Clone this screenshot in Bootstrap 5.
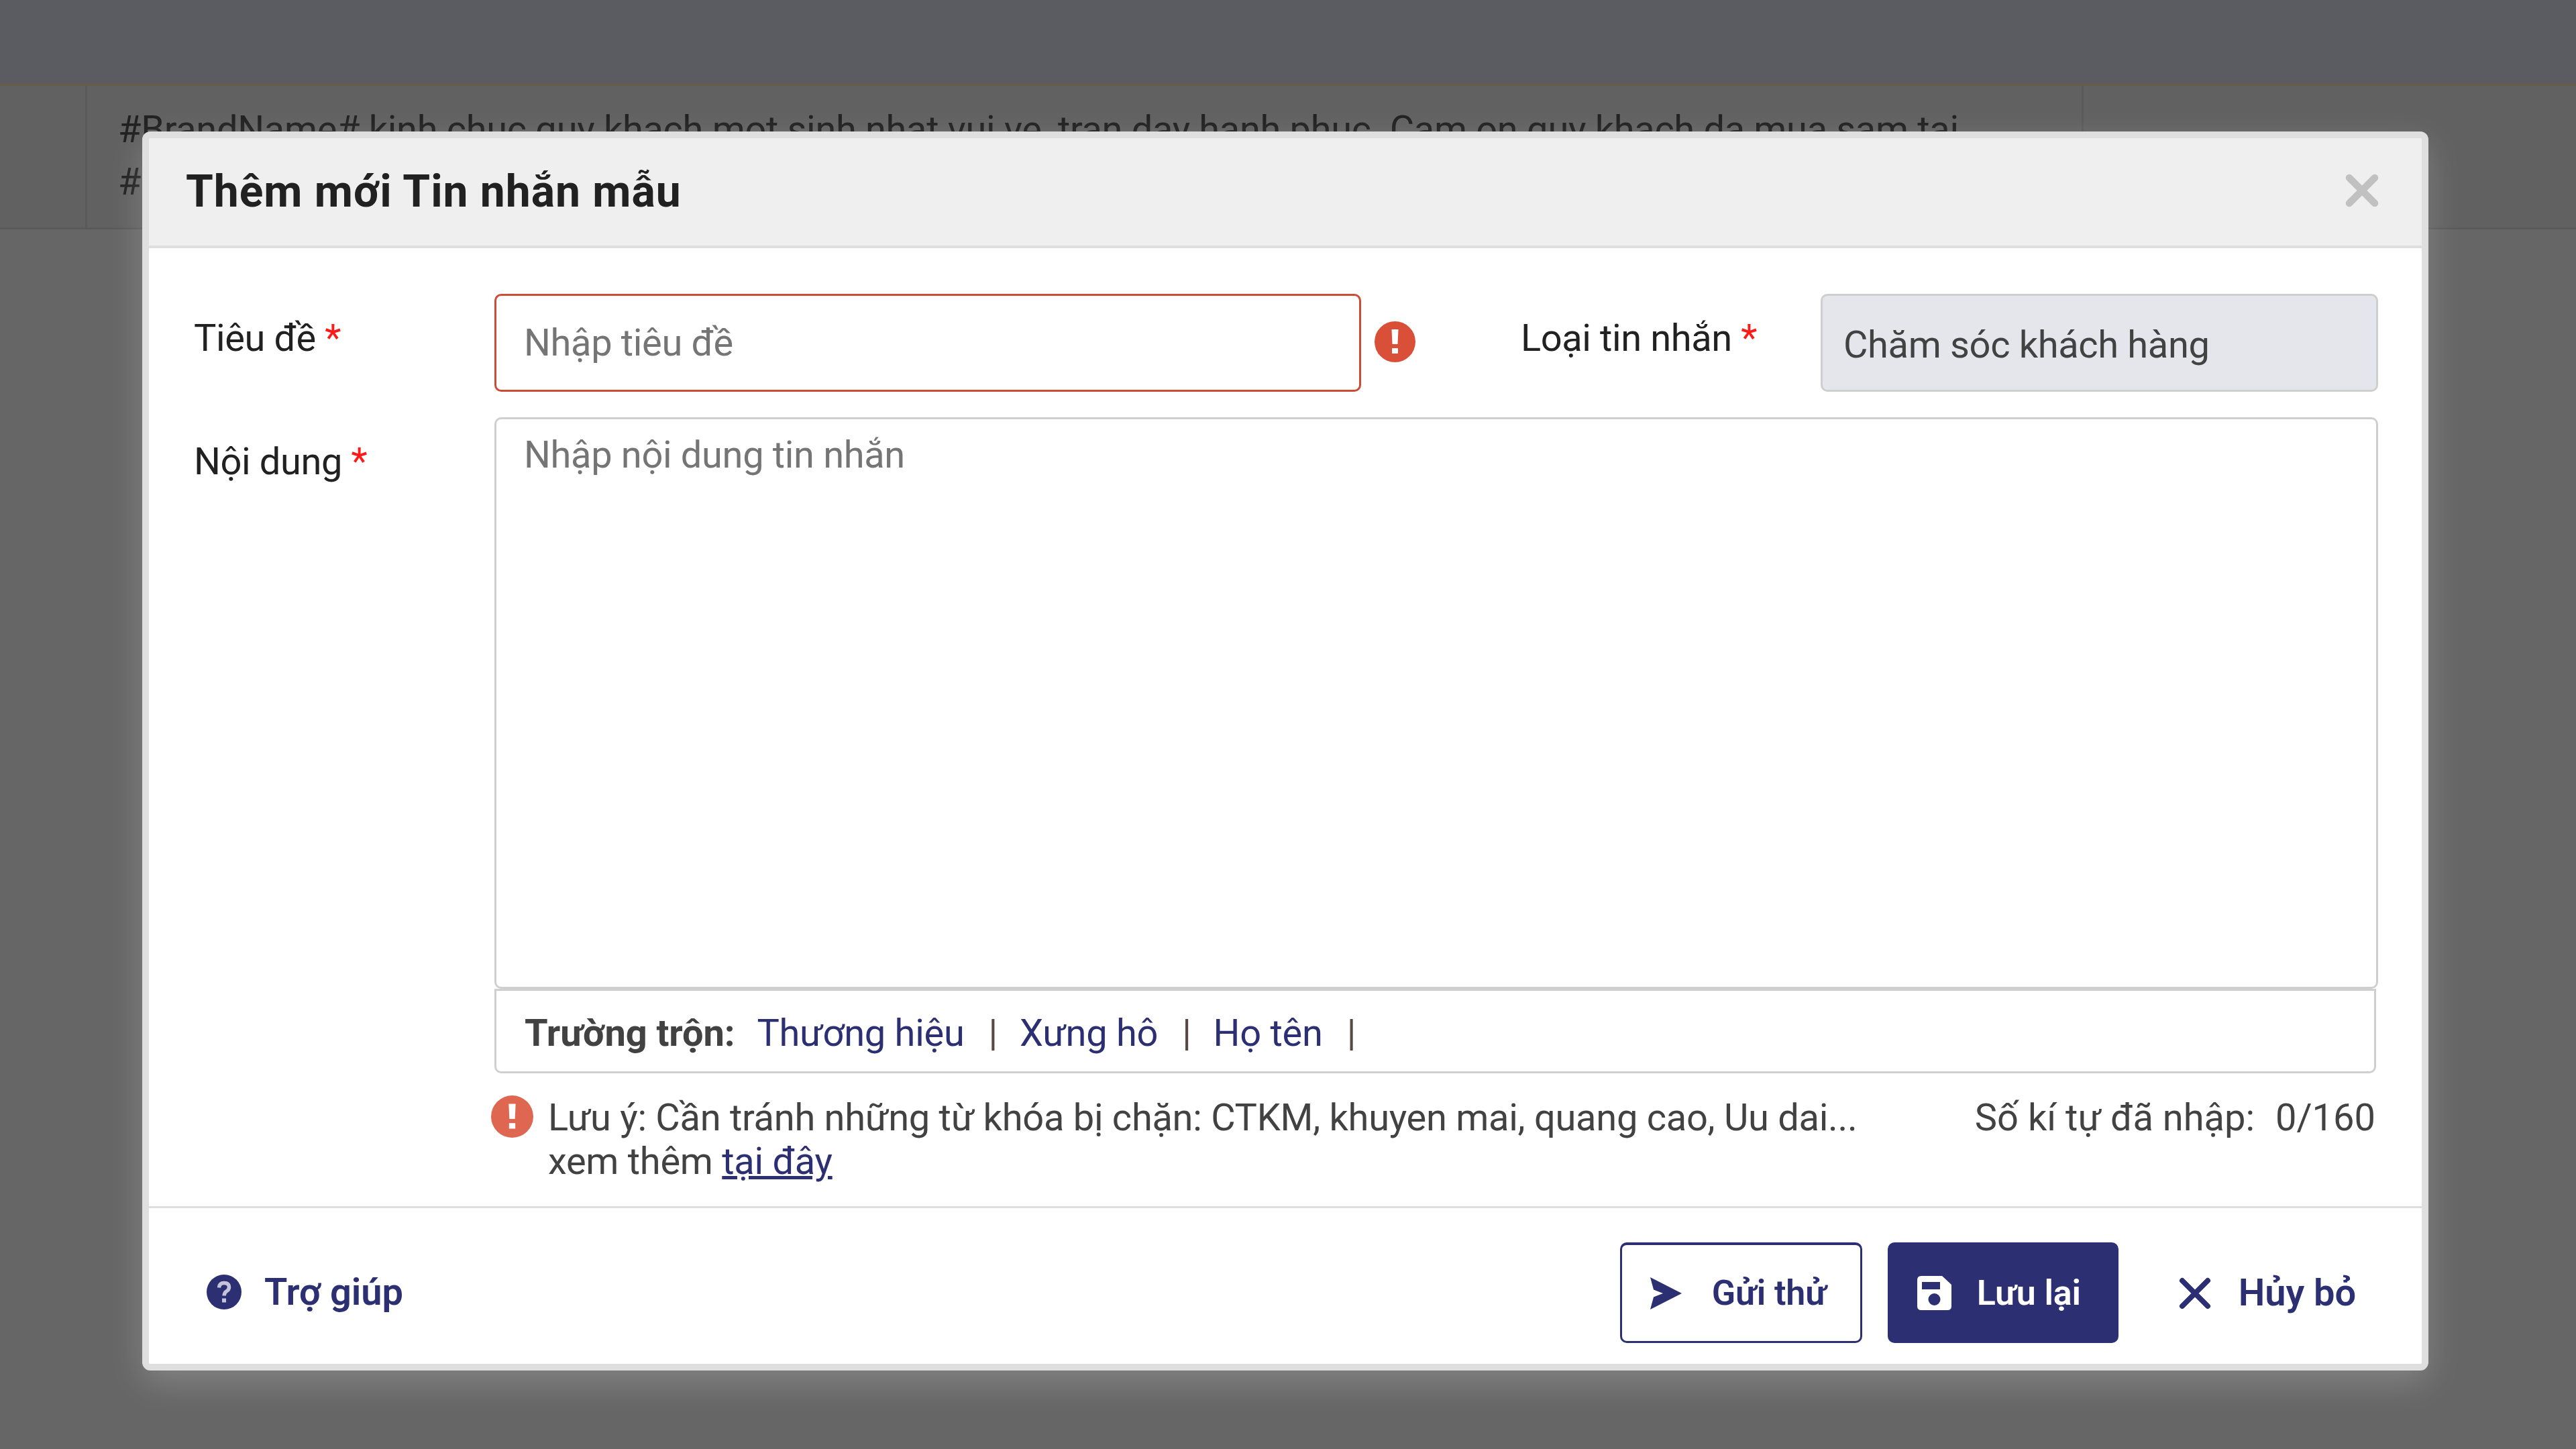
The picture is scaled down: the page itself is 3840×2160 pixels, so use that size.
<!DOCTYPE html>
<html lang="vi">
<head>
<meta charset="utf-8">
<title>Thêm mới Tin nhắn mẫu</title>
<link href="https://cdn.jsdelivr.net/npm/bootstrap@5.3.0/dist/css/bootstrap.min.css" rel="stylesheet">
<style>
body{width:3840px;height:2160px;overflow:hidden;background:#666;font-family:Roboto,"Liberation Sans",sans-serif;font-size:56px;line-height:65px;letter-spacing:-.28px;color:#424242}
.t-head{height:124px;background:#5b5c61}
.t-row{height:218px;background:#616161;border-top:4px solid #655c49;border-bottom:3px solid #5a5a5a;color:#212121;line-height:78px;letter-spacing:-.34px}
.c-a{width:130px}.c-b{width:2976px}
.t-row .c-a,.t-row .c-b{border-right:3px solid #5a5a5a}
.t-row .c-b{padding:26px 0 0 46px}
.dlg{position:absolute;left:212px;top:196px;width:3408px;height:1847px;border:10px solid #dfdfdf;border-radius:12px;background:#fff;box-shadow:0 17px 52px rgba(255,255,255,.2)}
.dlg-head{height:164px;background:#efefef;border-bottom:4px solid #dfdfdf;padding:0 64px 4px 55px}
.dlg-title{font-size:66px;line-height:78px;font-weight:700;color:#212121;letter-spacing:.95px;padding-top:3px}
.dlg-body{padding:68px 65px 0 67px;height:1428px}
.lab{width:448px;color:#212121;padding-top:34px;letter-spacing:-.4px}
.lab2{width:447px;margin-left:157px}
.req{color:#ff1a1a}
.fld{border:3px solid #cfcfcf;border-radius:10px;font-size:56px;line-height:65px;letter-spacing:-.35px;color:#424242;padding:0 41px}
.fld::placeholder{color:#757575;opacity:1}
.f-title{width:1292px;height:146px;border-color:#cd4c36}
.f-type{width:831px;height:146px;background:#e4e6eb!important;padding:5px 31px 0}
.f-text{width:2808px;height:852px;padding:21px 41px;resize:none}
.warn{margin:41px 0 0 20px}
.row-text{margin-top:38px}
.mix{width:2805px;height:126px;border:3px solid #cfcfcf;border-radius:0 0 10px 10px;padding:31px 0 0 42px}
.mix b{margin-right:33px;letter-spacing:-.1px}
.mix i{font-style:normal;margin:0 33px 0 36px;color:#574842}
.nv{color:#2c3072}
.note{margin:33px 0 0 -5px;width:2809px}
.note svg{margin-right:22px}
.note-text{padding-top:1px}
.count{gap:31px;letter-spacing:0;padding-top:1px}
.dlg-foot{height:235px;border-top:3px solid #dfdfdf;padding:51px 95px 0 86px;letter-spacing:-.1px}
.bt{height:150px;border:4px solid transparent;border-width:4px 3px 3px;border-radius:10px;padding:0;color:#2c3072;font-size:56px;font-weight:600;line-height:65px}
.bt-help{padding-bottom:3px;gap:34px}
.bt-help svg{margin-left:-3px}
.bt-send{width:361px;border-color:#2c3072;font-size:52px;padding-left:41px;gap:45px}
.bt-save{width:344px;background:#2c3072;color:#fff;font-size:52px;margin-left:38px;padding-left:41px;gap:38px}
.bt-quit{margin-left:87px;gap:41px}
</style>
<script src="https://cdn.jsdelivr.net/npm/bootstrap@5.3.0/dist/js/bootstrap.bundle.min.js"></script>
</head>
<body class="position-relative">
<div class="t-head"></div>
<div class="t-row d-flex"><div class="c-a flex-shrink-0"></div><div class="c-b flex-shrink-0">#BrandName# kinh chuc quy khach mot sinh nhat vui ve, tran day hanh phuc. Cam on quy khach da mua sam tai<br>#</div></div>

<div class="dlg" role="dialog">
  <div class="dlg-head d-flex align-items-center justify-content-between">
    <div class="dlg-title">Thêm mới Tin nhắn mẫu</div>
    <svg class="d-block" width="50" height="50" viewBox="0 0 50 50"><path d="M6 6L44 44M44 6L6 44" stroke="#c1c1c1" stroke-width="10.5" stroke-linecap="round"/></svg>
  </div>
  <div class="dlg-body">
    <div class="d-flex">
      <label class="lab flex-shrink-0">Tiêu đề <span class="req">*</span></label>
      <input class="form-control flex-shrink-0 fld f-title" placeholder="Nhập tiêu đề">
      <svg class="warn flex-shrink-0" width="61" height="61" viewBox="0 0 61 61"><circle cx="30.5" cy="30.5" r="30.5" fill="#da4f37"/><path d="M25.5 12h10l-1 22h-8zM26 40h9v8h-9z" fill="#fff"/></svg>
      <label class="lab lab2 flex-shrink-0">Loại tin nhắn <span class="req">*</span></label>
      <input class="form-control flex-shrink-0 fld f-type" value="Chăm sóc khách hàng" disabled>
    </div>
    <div class="d-flex row-text">
      <label class="lab flex-shrink-0">Nội dung <span class="req">*</span></label>
      <div>
        <textarea class="form-control d-block fld f-text" placeholder="Nhập nội dung tin nhắn"></textarea>
        <div class="mix d-flex"><b>Trường trộn:</b><span class="nv">Thương hiệu</span><i>|</i><span class="nv">Xưng hô</span><i>|</i><span class="nv">Họ tên</span><i>|</i></div>
        <div class="note d-flex">
          <svg class="flex-shrink-0" width="63" height="63" viewBox="0 0 61 61"><circle cx="30.5" cy="30.5" r="30.5" fill="#df6752"/><path d="M25.5 12h10l-1 22h-8zM26 40h9v8h-9z" fill="#fff"/></svg>
          <div class="note-text">Lưu ý: Cần tránh những từ khóa bị chặn: CTKM, khuyen mai, quang cao, Uu dai...<br>xem thêm <a href="#" class="nv">tại đây</a></div>
          <div class="count ms-auto d-flex"><span>Số kí tự đã nhập:</span><span>0/160</span></div>
        </div>
      </div>
    </div>
  </div>
  <div class="dlg-foot d-flex justify-content-between">
    <div class="bt bt-help d-flex align-items-center"><svg width="52" height="52" viewBox="0 0 52 52"><circle cx="26" cy="26" r="26" fill="#2c3072"/><path d="M18.500 19.500Q19 12.500 26 12.500Q33.500 12.500 33.500 19Q33.500 22.500 29.500 25Q26.200 27 26.200 31.500" fill="none" stroke="#c4c5d8" stroke-width="5.500"/><rect x="23" y="35.500" width="6" height="6" fill="#c4c5d8"/></svg><span>Trợ giúp</span></div>
    <div class="d-flex">
      <div class="bt bt-send d-flex align-items-center"><svg width="48" height="48" viewBox="0 0 48 48"><path d="M1 0L48 24L1 48L6 29.500L20 24L6 18.500Z" fill="#2c3072"/></svg><span>Gửi thử</span></div>
      <div class="bt bt-save d-flex align-items-center"><svg width="51" height="51" viewBox="0 0 51 51"><path fill-rule="evenodd" fill="#fff" d="M6 0H37L51 13V45Q51 51 45 51H6Q0 51 0 45V6Q0 0 6 0ZM7 9V20H34V9ZM25.500 26A9 9 0 1 0 25.500 44A9 9 0 1 0 25.500 26Z"/></svg><span>Lưu lại</span></div>
      <div class="bt bt-quit d-flex align-items-center"><svg width="48" height="48" viewBox="0 0 48 48"><path d="M5 5L43 43M43 5L5 43" stroke="#2c3072" stroke-width="8" stroke-linecap="round"/></svg><span>Hủy bỏ</span></div>
    </div>
  </div>
</div>
</body>
</html>
